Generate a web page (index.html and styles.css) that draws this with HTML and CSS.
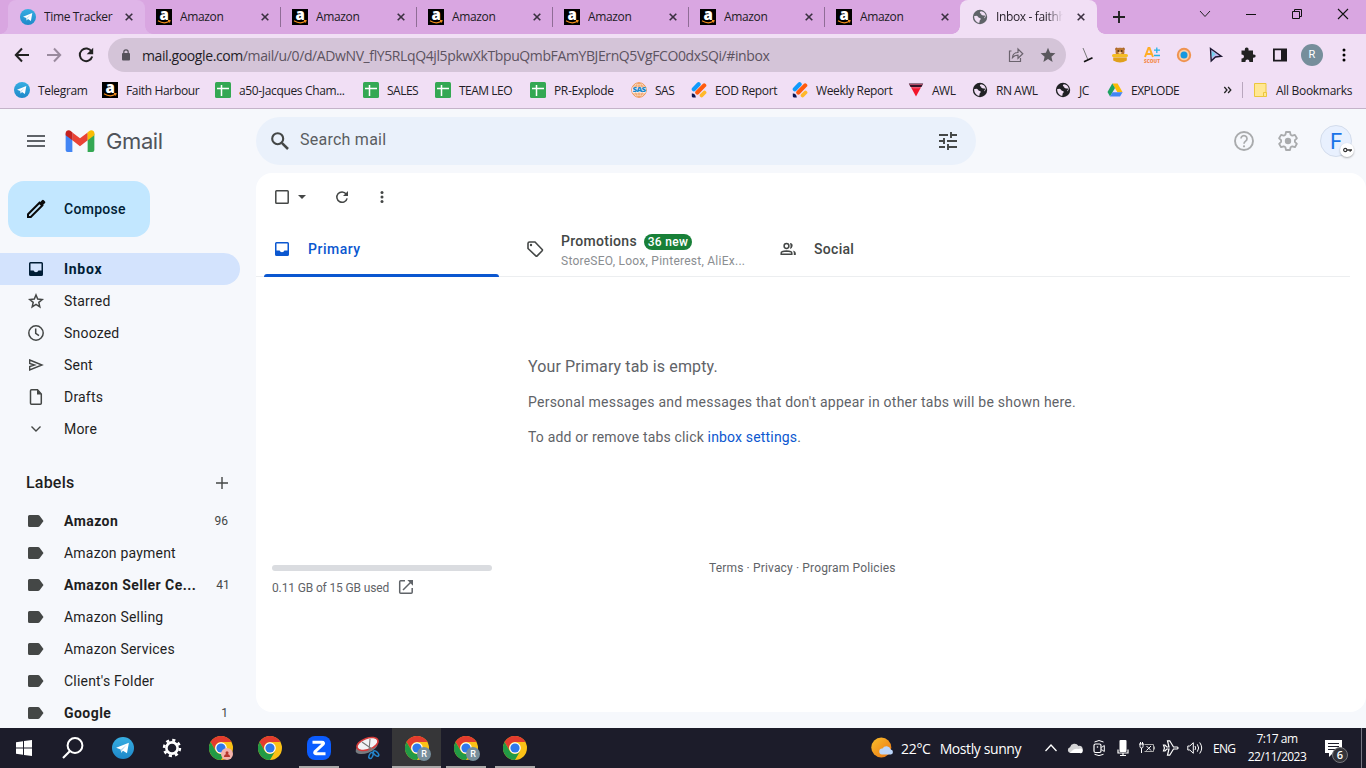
FILE: index.html
```html
<!DOCTYPE html>
<html lang="en">
<head>
    <meta charset="UTF-8">
    <meta name="viewport" content="width=device-width, initial-scale=1.0">
    <title>Inbox - Gmail</title>
    <link rel="stylesheet" href="styles.css">
</head>
<body>
    <!-- Shared icons -->
    <svg class="sprite" width="0" height="0">
        <defs>
            <linearGradient id="tgBlue" x1="0" y1="0" x2="0" y2="1">
                <stop offset="0" stop-color="#37aee2"/>
                <stop offset="1" stop-color="#1e88c9"/>
            </linearGradient>
            <linearGradient id="sun" x1="0" y1="0" x2="1" y2="1">
                <stop offset="0" stop-color="#f9bf2c"/>
                <stop offset="1" stop-color="#ec7412"/>
            </linearGradient>
        </defs>
        <symbol id="telegram" viewBox="0 0 16 16">
            <circle cx="8" cy="8" r="8" fill="url(#tgBlue)"/>
            <path d="M3 7.800 12.300 4.100 10.900 11.900 8 10 6.700 11.400 6.300 9.100z" fill="#fff"/>
            <path d="M6.300 9.100 10.800 5.700 7.300 9.600 6.700 11.400z" fill="#b9d9ee"/>
        </symbol>
        <symbol id="amazon" viewBox="0 0 16 16">
            <rect width="16" height="16" fill="#000"/>
            <text x="8" y="10.600" text-anchor="middle" font-family="Open Sans, sans-serif" font-weight="800" font-size="15" fill="#fff">a</text>
            <path d="M2 11.800q5.800 3.600 11 .8M12 11.600h2l-.6 1.900" fill="none" stroke="#f08c1c" stroke-width="1.100"/>
        </symbol>
        <symbol id="sheet" viewBox="0 0 16 16">
            <rect width="16" height="16" rx="1.500" fill="#34a853"/>
            <path d="M2 6.500h12M6.500 3v11" stroke="#fff" stroke-width="1.500"/>
        </symbol>
        <symbol id="globe" viewBox="0 0 16 16">
            <circle cx="8" cy="8" r="7.200" fill="currentColor"/>
            <path d="M2 7.200q3.200-1 4 .5t2.300 1.300q1.200 1.500-.5 2.300l-.6 2.600q-4.600-.9-5.200-6.700zM9 2.300q-1.800.7-.9 1.900 1.700.2 1.200 1.600 1.500 1.200 3.500.6.900 1.100-.4 1.700l-.2 1.400q1.900-1.400 1.500-3.300-.9-3.200-4.700-3.900z" fill="#f1dff5"/>
        </symbol>
        <symbol id="docs" viewBox="0 0 16 16">
            <path d="M2.800 7.200 7.600 2.300" stroke="#119bfb" stroke-width="4.200" stroke-linecap="round"/>
            <path d="M6.300 10.500 13.200 3.400" stroke="#ff5b0e" stroke-width="4.200" stroke-linecap="round"/>
            <path d="M10.600 13.400 13.500 10.500" stroke="#ffb829" stroke-width="3.800" stroke-linecap="round"/>
            <path d="M.8 11.500q3.600-.2 4 4H2q-1.400 0-1.200-1.400z" fill="#0b1550"/>
        </symbol>
        <symbol id="chrome" viewBox="0 0 24 24">
            <circle cx="12" cy="12" r="12" fill="#fbc116"/>
            <path d="M1.600 6A12 12 0 0 1 22.400 6H12a6 6 0 0 0-5.200 9z" fill="#e33b2e"/>
            <path d="M1.600 6a12 12 0 0 0 10.400 18l5.200-9A6 6 0 0 1 6.800 15z" fill="#229a45"/>
            <circle cx="12" cy="12" r="5.800" fill="#fff"/>
            <circle cx="12" cy="12" r="4.600" fill="#2f78eb"/>
        </symbol>
        <symbol id="close" viewBox="0 0 8 8">
            <path d="M.7.7l6.600 6.600M7.300.7.7 7.300" stroke="#3a3040" stroke-width="1.600"/>
        </symbol>
        <symbol id="label" viewBox="0 0 16 12">
            <path d="M1.500 0H10q1 0 1.600.8L15.500 6l-3.900 5.200q-.6.8-1.600.8H1.500Q0 12 0 10.500v-9Q0 0 1.500 0z" fill="#444746"/>
        </symbol>
        <symbol id="inbox" viewBox="0 0 14 14">
            <path fill-rule="evenodd" d="M1.500 0h11Q14 0 14 1.500v11q0 1.500-1.500 1.500h-11Q0 14 0 12.500v-11Q0 0 1.500 0zM1.500 1.500v7H4.600a2.500 2.500 0 0 0 4.800 0h3.100v-7z" fill="currentColor"/>
        </symbol>
    </svg>

    <div class="browser">
        <div class="tab-strip">
            <div class="tab hovered"><svg class="favicon"><use href="#telegram"/></svg><span>Time Tracker</span><svg class="close"><use href="#close"/></svg></div>
            <div class="tab divided"><svg class="favicon"><use href="#amazon"/></svg><span>Amazon</span><svg class="close"><use href="#close"/></svg></div>
            <div class="tab divided"><svg class="favicon"><use href="#amazon"/></svg><span>Amazon</span><svg class="close"><use href="#close"/></svg></div>
            <div class="tab divided"><svg class="favicon"><use href="#amazon"/></svg><span>Amazon</span><svg class="close"><use href="#close"/></svg></div>
            <div class="tab divided"><svg class="favicon"><use href="#amazon"/></svg><span>Amazon</span><svg class="close"><use href="#close"/></svg></div>
            <div class="tab divided"><svg class="favicon"><use href="#amazon"/></svg><span>Amazon</span><svg class="close"><use href="#close"/></svg></div>
            <div class="tab"><svg class="favicon"><use href="#amazon"/></svg><span>Amazon</span><svg class="close"><use href="#close"/></svg></div>
            <div class="tab active"><svg class="favicon gray"><use href="#globe"/></svg><span>Inbox - faithh</span><svg class="close"><use href="#close"/></svg></div>
            <svg class="new-tab" viewBox="0 0 12 12"><path d="M6 0v12M0 6h12" stroke="#222" stroke-width="1.900"/></svg>
            <div class="window-buttons">
                <svg viewBox="0 0 12 12"><path d="M1 3l5 5.500L11 3" fill="none" stroke="#222"/></svg>
                <svg viewBox="0 0 12 12"><path d="M1 6.500h10" stroke="#111"/></svg>
                <svg viewBox="0 0 12 12"><path d="M1.500 3.500h7v7h-7zM3.500 3.500v-2h7v7h-2" fill="none" stroke="#111"/></svg>
                <svg viewBox="0 0 12 12"><path d="M1 1l10 10M11 1 1 11" stroke="#111" stroke-width="1.100"/></svg>
            </div>
        </div>

        <div class="address-row">
            <div class="nav-buttons">
                <svg viewBox="0 0 16 16"><path d="M15 8H2M8 1.500 1.800 8 8 14.500" fill="none" stroke="#222" stroke-width="2"/></svg>
                <svg viewBox="0 0 16 16"><path d="M1 8h13M8 1.500 14.200 8 8 14.500" fill="none" stroke="#9a8a9e" stroke-width="2"/></svg>
                <svg viewBox="0 0 16 16"><path d="M13.600 4.700A6.300 6.300 0 1 0 14.200 9.500" fill="none" stroke="#222" stroke-width="2"/><path d="M15.200.8v6.500H8.700z" fill="#222"/></svg>
            </div>
            <div class="omnibox">
                <svg class="lock" viewBox="0 0 8 12"><rect y="4" width="8" height="7.500" rx="1" fill="#55515a"/><path d="M1.800 5V3a2.200 2.200 0 0 1 4.400 0v2" fill="none" stroke="#55515a" stroke-width="1.200"/></svg>
                <div class="url"><b>mail.google.com</b>/mail/u/0/d/ADwNV_flY5RLqQ4jl5pkwXkTbpuQmbFAmYBJErnQ5VgFCO0dxSQi/#inbox</div>
                <svg class="share" viewBox="0 0 16 16"><path d="M3.500 4H1.500v10.500h11V11M4.500 10.500q.4-5 5.500-5V2l4.800 4.800L10 11.300V8.200q-3.600 0-5.500 2.300z" fill="none" stroke="#6b636e" stroke-width="1.200"/></svg>
                <svg class="star" viewBox="0 0 16 16"><path d="M8 .8l2.100 4.900 5.300.5-4 3.500 1.200 5.200L8 12.100l-4.600 2.800 1.200-5.200-4-3.500 5.300-.5z" fill="#5a585d"/></svg>
            </div>
            <div class="extensions">
                <svg viewBox="0 0 16 16"><path d="M3 1l5 12" stroke="#777" stroke-width="1"/><path d="M4 14.700l8.500-4" stroke="#111" stroke-width="1.700"/></svg>
                <svg viewBox="0 0 16 16"><circle cx="4.600" cy="2" r="1.500" fill="#a9611d"/><circle cx="11.400" cy="2" r="1.500" fill="#a9611d"/><rect x="3.600" y=".8" width="8.800" height="8" rx="3.500" fill="#b87433"/><circle cx="6.200" cy="4" r=".7"/><circle cx="9.800" cy="4" r=".7"/><ellipse cx="8" cy="5.800" rx="1.700" ry="1.100" fill="#f3d2a2"/><rect y="7" width="16" height="3.200" rx="1.600" fill="#f5bd24"/><path d="M1.200 10.600h13.600v3Q8 17.300 1.200 13.600z" fill="#e0a01b"/></svg>
                <svg viewBox="0 0 16 16"><path d="M1 10 4.500 1h1L9 10M2.500 7h5" fill="none" stroke="#ffad25" stroke-width="2"/><path d="M12.800.5v5.500M10 3.200h6M10 8.500h6" stroke="#27b3e5" stroke-width="1.300"/><text x="0" y="15.700" textLength="16" lengthAdjust="spacingAndGlyphs" font-family="Open Sans, sans-serif" font-size="5" font-weight="800" fill="#f58b4b">SCOUT</text></svg>
                <svg viewBox="0 0 16 16"><circle cx="8" cy="8" r="7.200" fill="#ef9350"/><circle cx="8" cy="8" r="5.200" fill="#f8cfa8"/><circle cx="8" cy="8" r="3.500" fill="#1498e0"/></svg>
                <svg viewBox="0 0 16 16"><path d="M2.500 1.500 13.300 9.300 7.500 10 3.200 14z" fill="#c5b7ee" stroke="#1c1730" stroke-width="1.400"/><path d="M3.800 4v6.500L7.600 7z" fill="#76d4ed"/></svg>
                <svg viewBox="0 0 16 16"><path d="M1.500 3.500h3.400q-.5-3 1.800-3t1.800 3H13V7.500q2.700-.5 2.700 1.500T13 10.800V15H9.300q.3-2.600-1.900-2.600T5.500 15h-4v-3.600q2.500.2 2.500-1.900T1.500 7.500z" fill="#222"/></svg>
                <svg viewBox="0 0 16 16"><path d="M1 1.500h14v13H1zm1.800 1.800v9.400H9V3.300z" fill="#1c1a1e" fill-rule="evenodd"/></svg>
                <div class="profile">R</div>
                <svg viewBox="0 0 16 16"><circle cx="8" cy="3" r="1.500"/><circle cx="8" cy="8" r="1.500"/><circle cx="8" cy="13" r="1.500"/></svg>
            </div>
        </div>

        <div class="bookmarks">
            <div class="bookmark"><svg><use href="#telegram"/></svg>Telegram</div>
            <div class="bookmark"><svg><use href="#amazon"/></svg>Faith Harbour</div>
            <div class="bookmark"><svg><use href="#sheet"/></svg>a50-Jacques Cham...</div>
            <div class="bookmark caps"><svg><use href="#sheet"/></svg>SALES</div>
            <div class="bookmark caps"><svg><use href="#sheet"/></svg>TEAM LEO</div>
            <div class="bookmark"><svg><use href="#sheet"/></svg>PR-Explode</div>
            <div class="bookmark caps"><svg viewBox="0 0 16 16"><circle cx="8" cy="8" r="7.300" fill="#fbe6d6" stroke="#ee9653"/><path d="M8 1v14M2.500 4h11M2.500 12h11" stroke="#ee9653" stroke-width=".8"/><ellipse cx="8" cy="8" rx="3.600" ry="7" fill="none" stroke="#ee9653" stroke-width=".8"/><path d="M1 5.600h14v4.800H1z" fill="#f6ebf5"/><text x="1.500" y="10.200" textLength="13" lengthAdjust="spacingAndGlyphs" font-family="Open Sans, sans-serif" font-size="6" font-weight="800" fill="#1689ca">SAS</text></svg>SAS</div>
            <div class="bookmark"><svg><use href="#docs"/></svg>EOD Report</div>
            <div class="bookmark"><svg><use href="#docs"/></svg>Weekly Report</div>
            <div class="bookmark caps"><svg viewBox="0 0 16 16"><path d="M.8 1.500h14.400L13.500 5h-11z" fill="#351327"/><path d="M3 5.200h10L8 14.500z" fill="#f3142a"/><path d="M4.500 6h7M1.500 2.500h13" stroke="#e66c89" stroke-width=".7"/></svg>AWL</div>
            <div class="bookmark caps"><svg class="dark"><use href="#globe"/></svg>RN AWL</div>
            <div class="bookmark caps"><svg class="dark"><use href="#globe"/></svg>JC</div>
            <div class="bookmark caps"><svg viewBox="0 0 16 16"><path d="M5.300 1.500h5.300l5 8.700h-5.200z" fill="#fbbc05"/><path d="M5.300 1.500 8 6 3 14.500.5 10z" fill="#1da261"/><path d="M5.500 10.200h10.100L13 14.500H3z" fill="#4285f4"/></svg>EXPLODE</div>
            <div class="overflow"><svg viewBox="0 0 8 8"><path d="M.8 1 3.500 4 .8 7M4.600 1 7.300 4 4.600 7" fill="none" stroke="#222" stroke-width="1.300"/></svg></div>
            <div class="all-bookmarks"><svg viewBox="0 0 13 14"><path d="M.5.500h11.500v13H.5z" fill="#ffe793" stroke="#ecc73d"/><path d="M9.500 13.500v-4h3v4z" fill="#ffe793" stroke="#ecc73d"/></svg>All Bookmarks</div>
        </div>
    </div>

    <div class="gmail">
        <header class="header">
            <div class="brand">
                <svg class="menu" viewBox="0 0 18 12"><path d="M0 1h18M0 6h18M0 11h18" stroke="#5f6368" stroke-width="2"/></svg>
                <svg class="logo" viewBox="0 0 30 23">
                    <path d="M0 4h7v19H2q-2 0-2-2z" fill="#4285f4"/>
                    <path d="M23 4h7v17q0 2-2 2h-5z" fill="#34a853"/>
                    <path d="M7 2.500 15 8.700l8-6.200v8.300L15 17l-8-6.200z" fill="#ea4335"/>
                    <path d="M0 3.500C0 .3 3.300-.8 5.700 1.200L7 2.500v8.300L0 5.500z" fill="#c5221f"/>
                    <path d="M30 3.500C30 .3 26.700-.8 24.300 1.200L23 2.500v8.300l7-5.300z" fill="#fbbc04"/>
                </svg>
                <span class="brand-name">Gmail</span>
            </div>
            <div class="search">
                <svg class="search-icon" viewBox="0 0 18 18"><circle cx="6.700" cy="6.700" r="5.500" fill="none" stroke="#444746" stroke-width="2.100"/><path d="M10.800 10.800l6.200 6.200" stroke="#444746" stroke-width="2.500"/></svg>
                <span>Search mail</span>
                <svg class="tune" viewBox="0 0 18 18"><path d="M0 3h9M11 3h7M12 0v6M0 9h6M8 9h10M5 6v6M0 15h6M8 15h10M9 12v6" stroke="#444746" stroke-width="1.900" fill="none"/></svg>
            </div>
            <div class="header-actions">
                <svg viewBox="0 0 20 20"><circle cx="10" cy="10" r="9" fill="none" stroke="#a9abad" stroke-width="1.900"/><path d="M7 7.600a3 3 0 1 1 4.600 2.500Q10 11.200 10 12.800" fill="none" stroke="#a9abad" stroke-width="1.700"/><circle cx="10" cy="15.300" r="1.100" fill="#a9abad"/></svg>
                <svg viewBox="0 0 20 20"><path d="M8 1h4l.6 2.700 1.700 1 2.600-.8 2 3.400-2 1.900v1.700l2 1.900-2 3.400-2.600-.9-1.700 1L12 19H8l-.6-2.700-1.700-1-2.600.9-2-3.400 2-1.900V9.200l-2-1.900 2-3.400 2.600.8 1.700-1z" fill="none" stroke="#a9abad" stroke-width="1.800" stroke-linejoin="round"/><circle cx="10" cy="10" r="3.200" fill="#a9abad"/></svg>
                <div class="account">F<span class="key"><svg viewBox="0 0 10 6"><circle cx="2.500" cy="3" r="1.800" fill="none" stroke="#333" stroke-width="1.300"/><path d="M4.500 3H10M8 3v2" stroke="#333" stroke-width="1.400"/></svg></span></div>
            </div>
        </header>

        <div class="content">
            <nav class="sidebar">
                <div class="compose">
                    <svg viewBox="0 0 20 20"><path d="M2 15.300 13.500 3.700l2.800 2.800L4.800 18H2z" fill="none" stroke="#0a0a0a" stroke-width="2"/><path d="M12.800 4.400 16 1.200q1-.8 1.800 0l1.200 1.200q.8.900 0 1.700L15.800 7.300z" fill="#0a0a0a"/></svg>
                    Compose
                </div>
                <ul class="folders">
                    <li class="selected"><svg class="box"><use href="#inbox"/></svg>Inbox</li>
                    <li><svg viewBox="0 0 16 16"><path d="M8 2l1.700 4.100 4.500.4-3.400 2.900 1 4.400L8 11.400l-3.800 2.400 1-4.400L1.800 6.500l4.500-.4z" fill="none" stroke="#444746" stroke-width="1.500"/></svg>Starred</li>
                    <li><svg viewBox="0 0 16 16"><circle cx="8" cy="8" r="7.200" fill="none" stroke="#444746" stroke-width="1.500"/><path d="M7.700 3.500v4.900l3.300 2.300" fill="none" stroke="#444746" stroke-width="1.500"/></svg>Snoozed</li>
                    <li><svg viewBox="0 0 16 16"><path d="M1.700 3 14 8 1.700 13V9.500L6.500 8 1.700 6.500z" fill="none" stroke="#444746" stroke-width="1.400"/></svg>Sent</li>
                    <li><svg viewBox="0 0 16 16"><path d="M3.500.8h6L13.300 5v9.200q0 1-1 1H3.500q-1 0-1-1V1.800q0-1 1-1z" fill="none" stroke="#444746" stroke-width="1.500"/><path d="M9 .5V5.500h4.500z" fill="#444746"/></svg>Drafts</li>
                    <li><svg viewBox="0 0 16 16"><path d="M3.500 5.500 8 10l4.500-4.500" fill="none" stroke="#444746" stroke-width="1.400"/></svg>More</li>
                </ul>
                <div class="labels-title">Labels<svg viewBox="0 0 12 12"><path d="M6 0v12M0 6h12" stroke="#444746" stroke-width="1.400"/></svg></div>
                <ul class="folders labels">
                    <li class="unread"><svg><use href="#label"/></svg><span>Amazon</span><em>96</em></li>
                    <li><svg><use href="#label"/></svg><span>Amazon payment</span></li>
                    <li class="unread"><svg><use href="#label"/></svg><span>Amazon Seller Ce...</span><em>41</em></li>
                    <li><svg><use href="#label"/></svg><span>Amazon Selling</span></li>
                    <li><svg><use href="#label"/></svg><span>Amazon Services</span></li>
                    <li><svg><use href="#label"/></svg><span>Client's Folder</span></li>
                    <li class="unread"><svg><use href="#label"/></svg><span>Google</span><em>1</em></li>
                </ul>
            </nav>

            <main class="mail">
                <div class="mail-tools">
                    <svg class="check" viewBox="0 0 14 14"><rect x=".8" y=".8" width="12.400" height="12.400" rx=".8" fill="none" stroke="#444746" stroke-width="1.500"/></svg>
                    <svg class="caret" viewBox="0 0 8 4"><path d="M0 0h8L4 4z" fill="#444746"/></svg>
                    <svg class="refresh" viewBox="0 0 12 12"><path d="M10.200 3A5.200 5.200 0 1 0 11.100 7.300" fill="none" stroke="#444746" stroke-width="1.500"/><path d="M12 0v5H7z" fill="#444746"/></svg>
                    <svg class="dots" viewBox="0 0 4 12"><circle cx="2" cy="1.600" r="1.500"/><circle cx="2" cy="6" r="1.500"/><circle cx="2" cy="10.400" r="1.500"/></svg>
                </div>
                <div class="categories">
                    <div class="category current"><svg class="box"><use href="#inbox"/></svg><span>Primary</span></div>
                    <div class="category">
                        <svg class="tag" viewBox="0 0 16 16"><path d="M1 2.500Q1 1 2.500 1H8l7.200 7.500q.6.600 0 1.200l-5 5.200q-.7.600-1.400 0L1 7.500z" fill="none" stroke="#444746" stroke-width="1.600"/><circle cx="4" cy="4" r="1.200" fill="#444746"/></svg>
                        <div class="category-text">
                            <div class="category-title">Promotions <span class="badge">36 new</span></div>
                            <div class="senders">StoreSEO, Loox, Pinterest, AliEx...</div>
                        </div>
                    </div>
                    <div class="category social">
                        <svg viewBox="0 0 16 14"><circle cx="6.500" cy="4" r="2.400" fill="none" stroke="#444746" stroke-width="1.500"/><path d="M1.200 12.200V11q0-1.600 5.300-1.900Q11.800 9.400 11.800 11v1.200z" fill="none" stroke="#444746" stroke-width="1.500"/><path d="M10 1q3 .4 2.600 3T10 7q1.200-3 0-6zM12.800 8.500q3 .7 3 2.400V13h-2v-2q0-1.500-1-2.500z" fill="#444746"/></svg>
                        <span>Social</span>
                    </div>
                </div>
                <div class="empty">
                    <p class="empty-title">Your Primary tab is empty.</p>
                    <p>Personal messages and messages that don't appear in other tabs will be shown here.</p>
                    <p class="hint">To add or remove tabs click <a>inbox settings</a>.</p>
                </div>
                <footer class="footer">
                    <div class="storage">
                        <div class="meter"></div>
                        <div class="usage">0.11 GB of 15 GB used <svg viewBox="0 0 14 14"><path d="M6 .8H1.700q-1 0-1 1v10.500q0 1 1 1h10.500q1 0 1-1V8M4 10 12 2" fill="none" stroke="#5f6368" stroke-width="1.500"/><path d="M8.300 0H14v5.700z" fill="#5f6368"/></svg></div>
                    </div>
                    <div class="terms">Terms · Privacy · Program Policies</div>
                </footer>
            </main>
        </div>
    </div>

    <div class="taskbar">
        <div class="apps">
            <div><svg width="16" height="16" viewBox="0 0 16 16"><path d="M0 2.300 7 1.300v6.200H0zM8 1.100 16 0v7.500H8zM0 8.500h7v6.200l-7-1zM8 8.500h8V16l-8-1.100z" fill="#fff"/></svg></div>
            <div><svg width="22" height="22" viewBox="0 0 22 22"><circle cx="13" cy="8.500" r="7.400" fill="none" stroke="#fff" stroke-width="2"/><path d="M8 14 1 21" stroke="#fff" stroke-width="2.200"/></svg></div>
            <div><svg width="22" height="22"><use href="#telegram"/></svg></div>
            <div><svg width="20" height="20" viewBox="0 0 20 20"><circle cx="10" cy="10" r="5.600" fill="none" stroke="#fff" stroke-width="2.600"/><circle cx="10" cy="10" r="7.900" fill="none" stroke="#fff" stroke-width="2.600" stroke-dasharray="3.100 3.100"/></svg></div>
            <div><svg width="24" height="24"><use href="#chrome"/></svg><i class="mini pink"><svg width="6" height="6" viewBox="0 0 6 6"><circle cx="3" cy="1.700" r="1.500" fill="#b5352c"/><path d="M0 6q0-3 3-3t3 3z" fill="#b5352c"/></svg></i></div>
            <div><svg width="24" height="24"><use href="#chrome"/></svg></div>
            <div class="open"><svg width="24" height="24" viewBox="0 0 24 24"><rect width="24" height="24" rx="8" fill="#0b5cff"/><path d="M5.500 6.300H15q2.500 0 1 2L8 15.700q-1 2 1 2h9.500" fill="none" stroke="#fff" stroke-width="3"/></svg></div>
            <div><svg width="25" height="24" viewBox="0 0 25 24"><ellipse cx="11.500" cy="11.500" rx="11.500" ry="5.500" transform="rotate(-20 11.500 11.500)" fill="#777b80"/><ellipse cx="12.500" cy="8" rx="11" ry="5.700" transform="rotate(-20 12.500 8)" fill="#f1f3f5" stroke="#d53b3b" stroke-width="1.600"/><path d="M7 6l10 7M15 3l-1 12" stroke="#777" stroke-width="1.100"/><ellipse cx="16" cy="19.500" rx="1.800" ry="3.200" transform="rotate(25 16 19.500)" fill="none" stroke="#2586cd" stroke-width="1.500"/><ellipse cx="21" cy="17.500" rx="1.800" ry="3.400" transform="rotate(-45 21 17.500)" fill="none" stroke="#2586cd" stroke-width="1.500"/></svg></div>
            <div class="open focused"><svg width="24" height="24"><use href="#chrome"/></svg><i class="mini">R</i></div>
            <div class="open"><svg width="24" height="24"><use href="#chrome"/></svg><i class="mini">R</i></div>
            <div class="open"><svg width="24" height="24"><use href="#chrome"/></svg></div>
        </div>
        <div class="weather">
            <svg width="23" height="22" viewBox="0 0 23 22"><circle cx="10.300" cy="10.500" r="10" fill="url(#sun)"/><path d="M11 17.500a3 3 0 0 1 .5-6 4.600 4.600 0 0 1 8.300.9 2.600 2.600 0 0 1 .1 5.100z" fill="#bcd6fa"/></svg>
            <span class="degrees">22°C</span><span>Mostly sunny</span>
        </div>
        <div class="tray">
            <svg viewBox="0 0 16 16"><path d="M2.500 11 8 5l5.500 6" fill="none" stroke="#fff" stroke-width="1.300"/></svg>
            <svg viewBox="0 0 16 16"><path d="M3.200 13a3 3 0 0 1-.2-5.800 4.700 4.700 0 0 1 8.500-1.300A3.600 3.600 0 0 1 12.800 13z" fill="#d4d4d6"/><path d="M3 13q4-5.500 8.500-4 4-1.500 4.200 1.700T12.800 13z" fill="#fff"/></svg>
            <svg viewBox="0 0 16 16"><path d="M3.500 2Q8-1 12.500 2M3.500 14.300q4.500 2.600 9 0" fill="none" stroke="#fff"/><rect x="3" y="4" width="7" height="8.500" rx="1.500" fill="none" stroke="#fff" stroke-width="1.200"/><path d="M10.500 7.500l2.800-2v6l-2.800-2" fill="none" stroke="#fff"/><circle cx="6.500" cy="7" r=".8" fill="#fff"/></svg>
            <svg viewBox="0 0 16 16"><rect x="4.500" y="0" width="7" height="12" rx="1" fill="#fff"/><path d="M3 9.500V13h10V9.500M8 13v3M5 15.500h6" fill="none" stroke="#fff" stroke-width="1.200"/></svg>
            <svg viewBox="0 0 16 16"><path d="M5.500 4.500h9v7h-9M15.500 6.500v3" fill="none" stroke="#aaa"/><path d="M0 4h5M1 4v2.500Q1 8 2.500 8T4 6.500V4M1.500 2v2M3.500 2v2M2.500 8v5M7.500 6l4.500 4.500M12 6l-4.500 4.500" fill="none" stroke="#fff"/></svg>
            <svg viewBox="0 0 16 16"><path d="M.5 5H2l1.800 2H6L4.500.8h2.200L10.500 7h3.700q1.800 1 0 2h-3.700l-3.800 6.200H4.500L6 9H3.800L2 11H.5l1-3z" fill="none" stroke="#fff" stroke-width="1.200"/></svg>
            <svg viewBox="0 0 16 16"><path d="M.8 6h2l3.500-3.300v10.600L2.800 10h-2zM8 6q1.500 2 0 4M10.300 4.300q2.700 3.700 0 7.400M12.700 2.500q4 5.500 0 11" fill="none" stroke="#fff"/></svg>
        </div>
        <span class="lang">ENG</span>
        <div class="clock">7:17 am<br>22/11/2023</div>
        <div class="notice"><svg width="18" height="17" viewBox="0 0 18 17"><path d="M0 0h17v13H8l-4 4v-4H0z" fill="#fff"/><path d="M3 3.500h11M3 6.500h11M3 9.500h8" stroke="#1c1c2a"/></svg><span>6</span></div>
    </div>
</body>
</html>
```

FILE: styles.css
```css
* {
    box-sizing: border-box;
}

body {
    margin: 0;
    width: 1366px;
    height: 768px;
    overflow: hidden;
    display: flex;
    flex-direction: column;
    font-family: Roboto, "Liberation Sans", sans-serif;
    color: #1f1f1f;
    background: #f6f8fc;
}

svg {
    display: block;
    flex: none;
    overflow: visible;
}

.sprite {
    position: absolute;
}

/* Browser window */
.browser {
    flex: none;
    height: 109px;
    background: #f1dff5;
    border-bottom: 1px solid #c4b3c9;
    font-family: "Open Sans", "Noto Sans", sans-serif;
    font-size: 12px;
    color: #221c25;
}

.tab-strip {
    display: flex;
    align-items: center;
    height: 34px;
    padding-left: 8px;
    background: #d9a6e1;
}

.tab {
    display: flex;
    align-items: center;
    position: relative;
    width: 136px;
    height: 34px;
    padding: 0 11px 0 12px;
    letter-spacing: -0.35px;
}

.tab span {
    flex: 1;
    margin: -1px 14px 0 8px;
    overflow: hidden;
    white-space: nowrap;
}

.tab.hovered {
    --tab-color: #dfb5e8;
    width: 137px;
    margin-right: -1px;
    padding-right: 12px;
}

.tab.hovered span {
    margin-right: 8px;
}

.tab.active {
    --tab-color: #f1dff5;
    width: 137px;
    padding-right: 12px;
}

.tab.hovered,
.tab.active {
    background: var(--tab-color);
    border-radius: 8px 8px 0 0;
}

/* Curved feet at the bottom of a raised tab */
.tab.hovered::before,
.tab.active::before,
.tab.hovered::after,
.tab.active::after {
    content: "";
    position: absolute;
    bottom: 0;
    width: 8px;
    height: 8px;
}

.tab.hovered::before,
.tab.active::before {
    left: -8px;
    background: radial-gradient(circle at 0 0, transparent 7.5px, var(--tab-color) 8px);
}

.tab.hovered::after,
.tab.active::after {
    right: -8px;
    background: radial-gradient(circle at 100% 0, transparent 7.5px, var(--tab-color) 8px);
}

.tab.active span {
    -webkit-mask-image: linear-gradient(90deg, #000 75%, transparent);
    mask-image: linear-gradient(90deg, #000 75%, transparent);
}

.tab.divided::after {
    content: "";
    position: absolute;
    right: -1px;
    top: 7px;
    width: 1px;
    height: 20px;
    background: #8f6d96;
}

.favicon {
    width: 16px;
    height: 16px;
}

.gray {
    color: #5f6368;
}

.dark {
    color: #202124;
}

.close {
    width: 8px;
    height: 8px;
}

.new-tab {
    width: 12px;
    height: 12px;
    margin-left: 16px;
}

.window-buttons {
    display: flex;
    gap: 34px;
    margin: -6px 17px 0 auto;
}

.window-buttons svg {
    width: 12px;
    height: 12px;
}

.address-row {
    display: flex;
    align-items: center;
    height: 42px;
    padding: 0 14px;
}

.nav-buttons {
    display: flex;
    gap: 16px;
    width: 94px;
}

.nav-buttons svg {
    width: 16px;
    height: 16px;
}

.omnibox {
    display: flex;
    align-items: center;
    width: 958px;
    height: 34px;
    padding: 0 10px 0 14px;
    border-radius: 17px;
    background: #d4c4d8;
}

.lock {
    width: 8px;
    height: 12px;
}

.url {
    flex: 1;
    margin-left: 12px;
    font-size: 14px;
    color: #5c5360;
    letter-spacing: -0.39px;
    white-space: nowrap;
}

.url b {
    font-weight: normal;
    color: #221c25;
}

.share,
.star {
    width: 16px;
    height: 16px;
    margin-left: 16px;
}

.extensions {
    display: flex;
    align-items: center;
    justify-content: space-between;
    flex: 1;
    margin-left: 14px;
}

.extensions svg {
    width: 16px;
    height: 16px;
}

.profile {
    width: 22px;
    height: 22px;
    margin: 0 -3px;
    border-radius: 50%;
    background: #768e9b;
    color: #fff;
    font: 11px/22px Roboto, sans-serif;
    text-align: center;
}

.bookmarks {
    display: grid;
    grid-template-columns: 88px 113px 148px 72px 95px 101px 60px 101px 116px 64px 83px 52px 116px 19px auto;
    align-items: center;
    height: 28px;
    padding-left: 14px;
}

.bookmark {
    display: flex;
    align-items: center;
    gap: 8px;
    white-space: nowrap;
    letter-spacing: -0.35px;
}

.bookmark.caps {
    letter-spacing: -0.5px;
}

.bookmark svg {
    width: 16px;
    height: 16px;
}

.overflow svg {
    width: 9px;
    height: 8px;
}

.all-bookmarks {
    display: flex;
    align-items: center;
    gap: 9px;
    height: 16px;
    padding-left: 11px;
    border-left: 1px solid #b9a7be;
    white-space: nowrap;
    letter-spacing: -0.3px;
}

.all-bookmarks svg {
    width: 13px;
    height: 14px;
}

/* Gmail */
.gmail {
    flex: 1;
    min-height: 0;
    display: flex;
    flex-direction: column;
    background: #f6f8fc;
}

.header {
    flex: none;
    display: flex;
    align-items: center;
    height: 64px;
}

.brand {
    display: flex;
    align-items: center;
    width: 256px;
    padding-left: 27px;
}

.menu {
    width: 18px;
    height: 12px;
}

.logo {
    width: 30px;
    height: 22px;
    margin: 0 11px 0 20px;
}

.brand-name {
    font: 22px/28px Inter, Roboto, sans-serif;
    color: #50545a;
    letter-spacing: -0.4px;
}

.search {
    display: flex;
    align-items: center;
    width: 720px;
    height: 48px;
    padding: 0 19px 0 15px;
    border-radius: 24px;
    background: #eaf1fb;
    font-size: 16px;
    color: #5a5d61;
    letter-spacing: 0.25px;
}

.search span {
    flex: 1;
    margin: -3px 0 0 11px;
}

.search-icon,
.tune {
    width: 18px;
    height: 18px;
}

.header-actions {
    display: flex;
    align-items: center;
    gap: 24px;
    margin-left: 258px;
}

.header-actions > svg {
    width: 20px;
    height: 20px;
}

.account {
    position: relative;
    width: 32px;
    height: 32px;
    margin-left: -2px;
    border: 1px solid #d3dcec;
    border-radius: 50%;
    background: #e8f0fe;
    color: #1a73e8;
    font-size: 22px;
    line-height: 31px;
    text-align: center;
}

.key {
    position: absolute;
    right: -3px;
    bottom: -1px;
    display: flex;
    align-items: center;
    justify-content: center;
    width: 14px;
    height: 14px;
    border-radius: 50%;
    background: #fff;
    box-shadow: 0 1px 2px rgba(0, 0, 0, 0.3);
}

.key svg {
    width: 9px;
    height: 6px;
}

.content {
    flex: 1;
    min-height: 0;
    display: flex;
}

.sidebar {
    width: 256px;
    overflow: hidden;
    padding-top: 8px;
    font-size: 14px;
    letter-spacing: 0.2px;
}

.compose {
    display: flex;
    align-items: center;
    gap: 18px;
    width: 142px;
    height: 56px;
    margin-left: 8px;
    padding-left: 18px;
    border-radius: 16px;
    background: #c2e7ff;
    color: #001d35;
    font-weight: 500;
    letter-spacing: 0.3px;
}

.compose svg {
    width: 20px;
    height: 20px;
}

.folders {
    list-style: none;
    margin: 16px 0 0;
    padding: 0;
}

.folders li {
    display: flex;
    align-items: center;
    gap: 20px;
    width: 240px;
    height: 32px;
    padding: 0 12px 0 28px;
}

.folders svg {
    width: 16px;
    height: 16px;
}

.folders .box {
    width: 14px;
    height: 14px;
    margin: 0 1px;
}

.folders .selected {
    border-radius: 0 16px 16px 0;
    background: #d3e3fd;
    color: #001d35;
    font-weight: bold;
    letter-spacing: 0.7px;
}

.labels-title {
    display: flex;
    align-items: center;
    justify-content: space-between;
    height: 28px;
    margin: 24px 28px 0 26px;
    padding-bottom: 1px;
    font-size: 16px;
    font-weight: 500;
}

.labels-title svg {
    width: 12px;
    height: 12px;
    margin-top: 1px;
}

.folders.labels {
    margin-top: 8px;
}

.folders.labels svg {
    height: 12px;
}

.labels span {
    flex: 1;
    white-space: nowrap;
}

.labels em {
    font-size: 12px;
    font-style: normal;
    font-weight: normal;
    color: #444746;
    letter-spacing: 0;
}

.unread {
    font-weight: bold;
    letter-spacing: 0.45px;
}

.mail {
    flex: 1;
    display: flex;
    flex-direction: column;
    height: 539px;
    border-radius: 16px;
    background: #fff;
}

.mail-tools {
    display: flex;
    align-items: center;
    height: 48px;
    padding-left: 19px;
}

.check {
    width: 14px;
    height: 14px;
}

.caret {
    width: 8px;
    height: 4px;
    margin-left: 9px;
}

.refresh {
    width: 12px;
    height: 12px;
    margin-left: 30px;
}

.dots {
    width: 4px;
    height: 12px;
    margin-left: 32px;
    fill: #444746;
}

.categories {
    display: flex;
    height: 56px;
    margin-right: 16px;
    border-bottom: 1px solid #eceef0;
}

.category {
    display: flex;
    align-items: center;
    position: relative;
    gap: 18px;
    width: 253px;
    height: 56px;
    padding-left: 18px;
    color: #444746;
    font-size: 14px;
    font-weight: 500;
    letter-spacing: 0.3px;
    white-space: nowrap;
}

.category svg {
    width: 16px;
    height: 14px;
}

.category .box {
    width: 14px;
    height: 14px;
    margin: 0 1px;
}

.category .tag {
    height: 16px;
}

.current {
    color: #0b57d0;
    letter-spacing: 0.5px;
}

.current::after {
    content: "";
    position: absolute;
    left: 8px;
    bottom: 0;
    width: 235px;
    height: 3px;
    border-radius: 3px 3px 0 0;
    background: #0b57d0;
}

.badge {
    margin-left: 3px;
    padding: 0 4px;
    border-radius: 8px;
    background: #188038;
    color: #fff;
    font-size: 12px;
    line-height: 16px;
    display: inline-block;
}

.category-text {
    padding-top: 4px;
}

.category-title {
    line-height: 20px;
}

.senders {
    color: #8b8e91;
    font-size: 12px;
    font-weight: normal;
    line-height: 20px;
    letter-spacing: 0.25px;
}

.empty {
    margin: 78px 0 0 272px;
    color: #5f6368;
    font-size: 14px;
    letter-spacing: 0.24px;
}

.empty p {
    margin: 0;
    line-height: 35px;
}

.empty .empty-title {
    line-height: 24px;
    margin-bottom: 6px;
    font-size: 16px;
    letter-spacing: 0.13px;
}

.empty .hint {
    letter-spacing: 0.17px;
}

.empty a {
    color: #0b57d0;
}

.footer {
    display: flex;
    margin: 107px 16px 0;
    color: #5f6368;
    font-size: 12px;
}

.storage {
    width: 437px;
    padding-top: 3px;
}

.meter {
    width: 220px;
    height: 6px;
    border-radius: 3px;
    background: #dadce0;
}

.usage {
    display: flex;
    align-items: center;
    gap: 10px;
    margin-top: 10px;
    letter-spacing: -0.14px;
}

.usage svg {
    width: 14px;
    height: 14px;
    margin-top: -2px;
}

.terms {
    line-height: 12px;
    letter-spacing: 0.15px;
}

/* Windows taskbar */
.taskbar {
    flex: none;
    display: flex;
    align-items: center;
    height: 40px;
    background: #1c1c2a;
    color: #fff;
    font-family: "Open Sans", "Noto Sans", sans-serif;
}

.apps {
    display: flex;
    width: 540px;
}

.apps > div {
    display: flex;
    align-items: center;
    justify-content: center;
    position: relative;
    width: 49px;
    height: 40px;
}

.apps > div:first-child,
.apps > div:nth-child(2) {
    padding-right: 2px;
}

.open::after {
    content: "";
    position: absolute;
    left: 5px;
    bottom: 0;
    width: 40px;
    height: 2px;
    background: #aaa9a9;
}

.focused {
    background: #363638;
}

.focused::after {
    left: 0;
    width: 49px;
}

.mini {
    position: absolute;
    left: 25px;
    top: 19px;
    display: flex;
    align-items: center;
    justify-content: center;
    width: 14px;
    height: 14px;
    border-radius: 50%;
    background: #768e9b;
    color: #fff;
    font: 500 9px Roboto, sans-serif;
}

.pink {
    width: 12px;
    height: 12px;
    top: 20px;
    background: #f4b3ab;
}

.weather {
    display: flex;
    align-items: center;
    gap: 9px;
    width: 168px;
    margin-left: 331px;
    font-size: 14px;
    letter-spacing: -0.4px;
    white-space: nowrap;
}

.weather svg {
    margin-right: -2px;
}

.weather .degrees {
    letter-spacing: -0.3px;
}

.tray {
    display: flex;
    gap: 8px;
    margin-left: 4px;
}

.tray svg {
    width: 16px;
    height: 16px;
}

.lang {
    width: 24px;
    margin-left: 10px;
    font-size: 12px;
    letter-spacing: -0.7px;
}

.clock {
    width: 70px;
    margin-left: 5px;
    font-size: 12px;
    line-height: 18px;
    letter-spacing: -0.5px;
    text-align: center;
}

.notice {
    position: relative;
    display: flex;
    align-items: center;
    flex: 1;
    height: 40px;
    margin: 0 4px 0 13px;
    border-right: 1px solid #777783;
}

.notice span {
    position: absolute;
    left: 7px;
    top: 19px;
    width: 16px;
    height: 16px;
    border: 1px solid #77777c;
    border-radius: 50%;
    background: #34343a;
    font-size: 11px;
    font-weight: 600;
    line-height: 14px;
    text-align: center;
}
```
